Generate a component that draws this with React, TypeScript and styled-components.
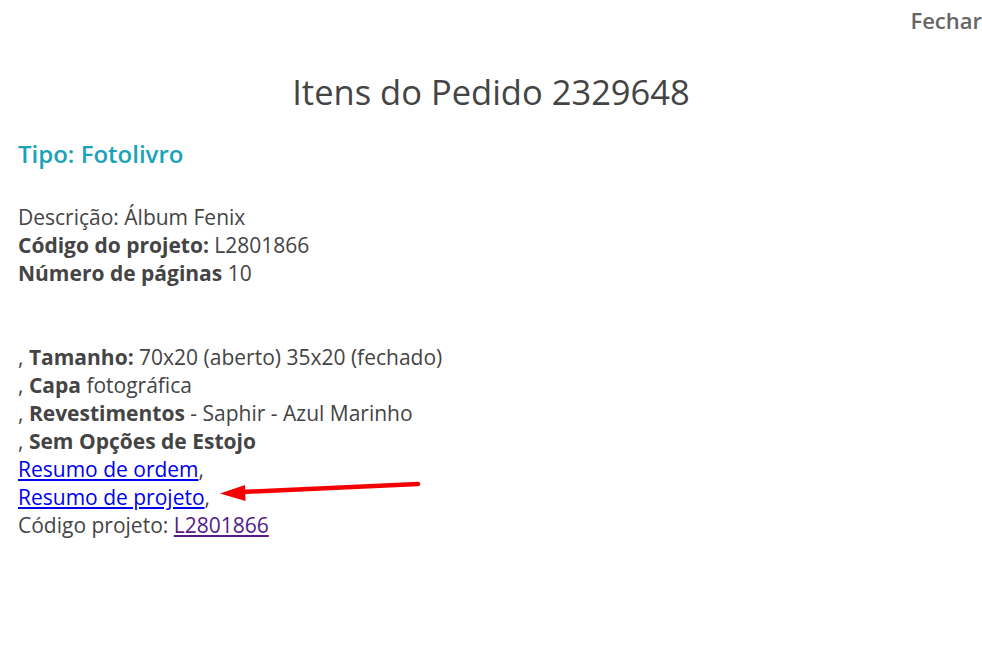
import React from 'react'
import styled, { createGlobalStyle } from 'styled-components'

const GlobalStyle = createGlobalStyle`
  html, body {
    margin: 0;
    padding: 0;
    background: #fff;
  }
  body {
    font-family: "Open Sans", "Liberation Sans", sans-serif;
    color: #444;
  }
`

const Page = styled.div`
  position: relative;
  width: 982px;
  height: 666px;
  overflow: hidden;
`

const TopBar = styled.div`
  display: flex;
  justify-content: flex-end;
  height: 38px;
`

const CloseButton = styled.button`
  border: none;
  background: none;
  padding: 1px 0 0;
  font-family: inherit;
  font-size: 22px;
  font-weight: 600;
  color: #666;
  line-height: 28px;
  cursor: pointer;
`

const Title = styled.h1`
  margin: 28px 0 0;
  text-align: center;
  font-size: 34.5px;
  font-weight: 400;
  line-height: 52px;
  color: #444;
`

const Body = styled.div`
  padding: 0 18px;
`

const TypeHeading = styled.h2`
  margin: 21px 0 0;
  font-size: 24px;
  font-weight: 600;
  line-height: 30px;
  color: #1aa3b8;
`

const Details = styled.div`
  margin-top: 34px;
  font-size: 21px;
  line-height: 28px;
`

const Line = styled.div`
  min-height: 28px;
`

const Strong = styled.b`
  font-weight: 700;
`

const Link = styled.a<{ $visited?: boolean }>`
  color: ${p => (p.$visited ? '#551a8b' : '#0000ee')};
  text-decoration: underline;
  text-underline-offset: 2px;
`

const Arrow = styled.svg`
  position: absolute;
  left: 218px;
  top: 476px;
`

export default function App() {
  return (
    <Page>
      <GlobalStyle />
      <TopBar>
        <CloseButton>Fechar</CloseButton>
      </TopBar>
      <Title>Itens do Pedido 2329648</Title>
      <Body>
        <TypeHeading>Tipo: Fotolivro</TypeHeading>
        <Details>
          <Line>Descrição: Álbum Fenix</Line>
          <Line><Strong>Código do projeto:</Strong> L2801866</Line>
          <Line><Strong>Número de páginas</Strong> 10</Line>
          <Line />
          <Line />
          <Line>, <Strong>Tamanho:</Strong> 70x20 (aberto) 35x20 (fechado)</Line>
          <Line>, <Strong>Capa</Strong> fotográfica</Line>
          <Line>, <Strong>Revestimentos</Strong> - Saphir - Azul Marinho</Line>
          <Line>, <Strong>Sem Opções de Estojo</Strong></Line>
          <Line><Link href="#">Resumo de ordem</Link>,</Line>
          <Line><Link href="#">Resumo de projeto</Link>,</Line>
          <Line>Código projeto: <Link href="#" $visited>L2801866</Link></Line>
        </Details>
      </Body>
      <Arrow width="206" height="26" viewBox="0 0 206 26">
        <line x1="24" y1="16" x2="200" y2="8" stroke="#f50000" strokeWidth="4.5" strokeLinecap="round" />
        <polygon points="2,17.5 27,9 27.5,25" fill="#f50000" />
      </Arrow>
    </Page>
  )
}
